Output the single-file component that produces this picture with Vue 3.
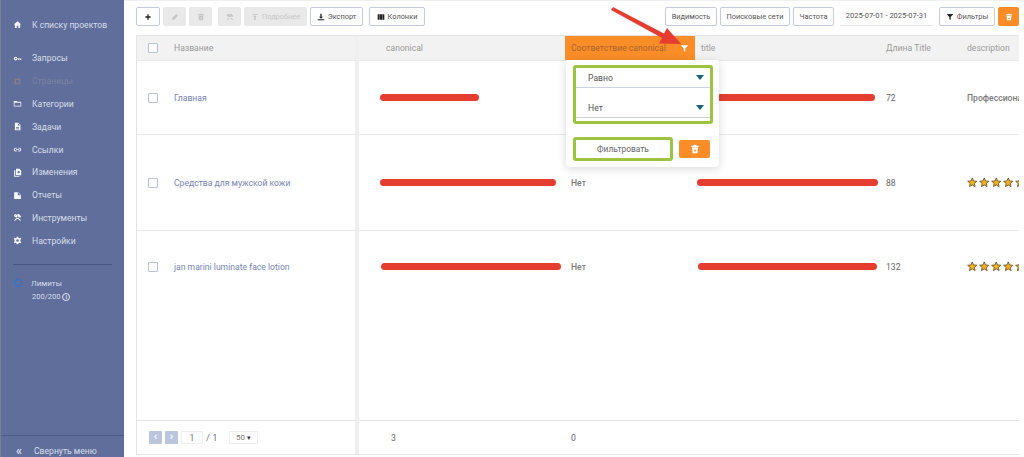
<script setup>
const icons = {
  home: 'M12 3 2 12h3v9h5v-6h4v6h5v-9h3z',
  key: 'M7 7a5 5 0 1 0 4.600 7H14v2h3v-2h2v2h3v-4H11.600A5 5 0 0 0 7 7zm0 3a2 2 0 1 1 0 4 2 2 0 0 1 0-4z',
  page: 'M4 4h16v16H4zM8 8v8h8V8z',
  folder: 'M2 5h8l2 2h10v13H2zm2 5v8h16v-8z',
  file: 'M5 2h9l6 6v14H5zM13 3.500V9h6zM8 13v2h8v-2zm0 4v2h8v-2z',
  link: 'M7 7a5 5 0 0 0 0 10h3v-2.500H7a2.500 2.500 0 0 1 0-5h3V7zm7 0v2.500h3a2.500 2.500 0 0 1 0 5h-3V17h3a5 5 0 0 0 0-10zM8 11v2h8v-2z',
  copy: 'M8 2h9l5 5v12H8zM3 6h3v15h11v2H3zm9 5a3 3 0 1 0 6 0 3 3 0 0 0-6 0z',
  report: 'M3 3h11l7 7v11H3zM13 3.500V11h7.500z',
  tools: 'M3 19 13 9l2 2L5 21zM10 5l5-3 7 7-3 3-3-1-3-3zM9 11 19 21l2-2L11 9A5 5 0 0 0 4 3l3 3-1 1-3-3A5 5 0 0 0 9 11z',
  gear: 'M10 2h4l.7 3 2.500 1.200 2.800-1.400 2 3.400L19.600 10v4l2.400 1.800-2 3.400-2.800-1.400L14.700 19 14 22h-4l-.7-3-2.500-1.200L4 19.200l-2-3.400L4.400 14v-4L2 8.200l2-3.400 2.800 1.400L9.300 5zM12 8.500a3.500 3.500 0 1 0 0 7 3.500 3.500 0 0 0 0-7z',
  trash: 'M9 2h6l1 2h5v3H3V4h5zM5 8h14l-1 14H6zm5 6v4h4v-4z',
  plus: 'M10 4h4v6h6v4h-6v6h-4v-6H4v-4h6z',
  pencil: 'M3 21l1-6L16 3l5 5L9 20z',
  upload: 'M3 3h18v2H3zM12 7l5 5h-3v9h-4v-9H7z',
  download: 'M10 2h4v9h4l-6 6-6-6h4zM2 19h20v3H2z',
  columns: 'M2 4h6v16H2zm7 0h6v16H9zm7 0h6v16h-6z',
  funnel: 'M2 3h20l-8 9v9l-4-3v-6z'
}
const menu = [
  { label: 'Запросы', icon: 'key' },
  { label: 'Страницы', icon: 'page', off: true },
  { label: 'Категории', icon: 'folder' },
  { label: 'Задачи', icon: 'file' },
  { label: 'Ссылки', icon: 'link' },
  { label: 'Изменения', icon: 'copy' },
  { label: 'Отчеты', icon: 'report' },
  { label: 'Инструменты', icon: 'tools' },
  { label: 'Настройки', icon: 'gear' }
]
const rows = [
  { name: 'Главная', c: 'c1', match: '', t: 't1', len: '72', desc: 'Профессиональная косметика' },
  { name: 'Средства для мужской кожи', c: 'c2', match: 'Нет', t: 't2', len: '88', stars: true },
  { name: 'jan marini luminate face lotion', c: 'c3', match: 'Нет', t: 't3', len: '132', stars: true }
]
const star = 'M12 2l3 7 7.500.7-5.700 5 1.700 7.300-6.500-3.900L5.500 22l1.700-7.300-5.700-5L9 9z'
</script>

<template>
  <div class="page">
    <aside class="side">
      <div class="top-link">
        <svg class="ico" viewBox="0 0 24 24"><path :d="icons.home" /></svg>
        <span>К списку проектов</span>
      </div>
      <nav class="menu">
        <div v-for="m in menu" :key="m.label" class="item" :class="{ off: m.off }">
          <svg class="ico" viewBox="0 0 24 24"><path :d="icons[m.icon]" /></svg>
          <span>{{ m.label }}</span>
        </div>
      </nav>
      <div class="limits">
        <div class="lim-row">
          <span class="ring"></span>
          <span>Лимиты</span>
        </div>
        <div class="lim-val">200/200 <span class="info">i</span></div>
      </div>
      <div class="collapse"><span class="dbl">«</span><span>Свернуть меню</span></div>
    </aside>

    <main class="main">
      <div class="toolbar">
        <div class="tools">
          <button class="btn w-plus"><svg viewBox="0 0 24 24"><path :d="icons.plus" /></svg></button>
          <button class="btn dis w-sq"><svg viewBox="0 0 24 24"><path :d="icons.pencil" /></svg></button>
          <button class="btn dis w-sq"><svg viewBox="0 0 24 24"><path :d="icons.trash" /></svg></button>
          <button class="btn dis w-sq gap-l"><svg viewBox="0 0 24 24"><path :d="icons.tools" /></svg></button>
          <button class="btn dis w-more"><svg viewBox="0 0 24 24"><path :d="icons.upload" /></svg>Подробнее</button>
          <button class="btn w-exp"><svg viewBox="0 0 24 24"><path :d="icons.download" /></svg>Экспорт</button>
          <button class="btn w-col gap-l"><svg viewBox="0 0 24 24"><path :d="icons.columns" /></svg>Колонки</button>
        </div>
        <div class="tools">
          <button class="btn w-vis">Видимость</button>
          <button class="btn w-net">Поисковые сети</button>
          <button class="btn w-freq">Частота</button>
          <div class="date">2025-07-01 - 2025-07-31</div>
          <button class="btn w-flt"><svg viewBox="0 0 24 24"><path :d="icons.funnel" /></svg>Фильтры</button>
          <button class="btn orange w-del"><svg viewBox="0 0 24 24"><path :d="icons.trash" /></svg></button>
        </div>
      </div>

      <div class="table">
        <div class="cell head first">
          <span class="check"></span><span>Название</span>
        </div>
        <div class="cell head pl-27">canonical</div>
        <div class="cell head active">
          <span>Соответствие canonical</span>
          <svg class="hfilter" viewBox="0 0 24 24"><path :d="icons.funnel" /></svg>
          <div class="popover">
            <div class="green selects">
              <div class="sel"><span>Равно</span><i class="tri"></i></div>
              <div class="sel"><span>Нет</span><i class="tri"></i></div>
            </div>
            <div class="pop-actions">
              <button class="green apply">Фильтровать</button>
              <button class="pop-del"><svg viewBox="0 0 24 24"><path :d="icons.trash" /></svg></button>
            </div>
          </div>
        </div>
        <div class="cell head">title</div>
        <div class="cell head">Длина Title</div>
        <div class="cell head clip">description</div>

        <template v-for="r in rows" :key="r.name">
          <div class="cell first line">
            <span class="check"></span><a class="name">{{ r.name }}</a>
          </div>
          <div class="cell line scrib-cell"><span class="scrib" :class="r.c"></span></div>
          <div class="cell line med">{{ r.match }}</div>
          <div class="cell line scrib-cell"><span class="scrib" :class="r.t"></span></div>
          <div class="cell line">{{ r.len }}</div>
          <div class="cell line clip">
            <span v-if="r.desc" class="med nowrap">{{ r.desc }}</span>
            <span v-else class="stars">
              <svg v-for="n in 5" :key="n" viewBox="0 0 24 24"><path :d="star" /></svg>
            </span>
          </div>
        </template>

        <div class="cell first filler"></div>
        <div class="cell"></div><div class="cell"></div><div class="cell"></div><div class="cell"></div><div class="cell"></div>

        <div class="cell first foot">
          <div class="pager">
            <span class="pg">‹</span><span class="pg">›</span>
            <span class="pg-input">1</span>
            <span class="pg-of">/ 1</span>
            <span class="pg-size">50 <i>▾</i></span>
          </div>
        </div>
        <div class="cell foot total-a">3</div>
        <div class="cell foot">0</div>
        <div class="cell foot"></div><div class="cell foot"></div><div class="cell foot"></div>
      </div>
    </main>

    <svg class="arrow" viewBox="0 0 1024 457">
      <path d="M613 7 664 33.500 667 28 681 44 659 43.500 662 38 611 10Z" />
    </svg>
  </div>
</template>

<style>
html, body { margin: 0; background: #fff; }
</style>

<style scoped>
.page {
  position: relative;
  display: flex;
  width: 1024px;
  height: 457px;
  overflow: hidden;
  font-family: Roboto, "Liberation Sans", sans-serif;
  font-size: 8.600px;
  color: #666;
  background: #fff;
}
.side {
  width: 124px;
  flex: none;
  display: flex;
  flex-direction: column;
  background: #5f6e9a;
  color: #d8deea;
  font-size: 8.600px;
  border-left: 1px solid #777f90;
  box-sizing: border-box;
}
.top-link, .item {
  display: flex;
  align-items: center;
  height: 23px;
  padding-left: 12px;
  gap: 10px;
}
.top-link { margin-top: 13px; }
.ico { width: 9px; height: 9px; fill: #f4f6fa; flex: none; }
.menu { margin-top: 11px; padding-bottom: 12px; }
.item { height: 22.800px; }
.item.off { color: #7b84a0; }
.item.off .ico { fill: #837f85; }
.limits {
  margin: 0 12px;
  padding-top: 10px;
  border-top: 1px solid #48557f;
  font-size: 8px;
}
.lim-row { display: flex; align-items: center; gap: 9px; height: 16px; }
.ring {
  width: 6px;
  height: 6px;
  border: 1.500px solid #2a74dd;
  border-radius: 50%;
  flex: none;
  margin-left: 1px;
}
.lim-val { margin: 0 0 0 19px; line-height: 12px; font-size: 7.500px; }
.info {
  display: inline-block;
  width: 6px;
  height: 6px;
  line-height: 6px;
  border: 1px solid #e6eaf2;
  border-radius: 50%;
  text-align: center;
  font-size: 6px;
  font-weight: 700;
  vertical-align: 0;
}
.collapse {
  margin-top: auto;
  height: 22px;
  border-top: 1px solid #4f5c86;
  display: flex;
  align-items: center;
  padding-left: 15px;
  gap: 12px;
  font-size: 8.600px;
  padding-top: 9px;
  box-sizing: border-box;
}
.dbl { font-weight: 700; font-size: 12px; }

.main {
  flex: 1;
  min-width: 0;
  padding: 1px 5px 2px 12px;
  display: flex;
  flex-direction: column;
  border-top: 1px solid #f0f0f0;
  box-sizing: border-box;
}
.toolbar {
  display: flex;
  justify-content: space-between;
  height: 33px;
  padding-top: 5px;
  box-sizing: border-box;
  flex: none;
}
.tools { display: flex; gap: 3px; height: 19px; }
.btn {
  display: inline-flex;
  align-items: center;
  justify-content: center;
  gap: 3px;
  height: 19px;
  padding: 0;
  box-sizing: border-box;
  border: 1px solid #c3cbe0;
  border-radius: 2px;
  background: #fff;
  color: #555;
  font: 7.400px Roboto, sans-serif;
}
.btn svg { width: 8px; height: 8px; fill: #222; flex: none; }
.btn.dis { background: #e9e9e9; border-color: #e9e9e9; color: #c6c6c6; }
.btn.dis svg { fill: #c4c4c4; }
.btn.orange { background: #fb8d28; border-color: #fb8d28; }
.btn.orange svg { fill: #fff; }
.w-plus { width: 24px; }
.w-sq { width: 23px; }
.gap-l { margin-left: 3px; }
.w-more { width: 63px; }
.w-exp { width: 53px; }
.w-col { width: 56px; }
.w-vis { width: 52px; }
.w-net { width: 70px; }
.w-freq { width: 41px; }
.w-flt { width: 56px; margin-left: 3px; }
.w-del { width: 21px; }
.date {
  width: 93px;
  margin-left: 3px;
  height: 19px;
  line-height: 18px;
  text-align: center;
  font-size: 7.500px;
  color: #555;
  white-space: nowrap;
  border-bottom: 1px solid #dfe2ec;
  box-sizing: border-box;
}

.table {
  flex: 1;
  min-height: 0;
  display: grid;
  grid-template-columns: 222px 206px 130px 185px 81px 58px;
  grid-template-rows: 25px 74px 96px 71px 1fr 34px;
  border: 1px solid #e4e4e4;
  border-right: 0;
}
.cell {
  display: flex;
  align-items: center;
  padding-left: 6px;
  min-width: 0;
  box-sizing: border-box;
}
.head { background: #f2f2f2; color: #9a9a9a; border-bottom: 1px solid #e9e9e9; }
.first { border-right: 4px solid #f0f0f0; padding-left: 11px; gap: 16px; }
.pl-27 { padding-left: 27px; }
.active {
  position: relative;
  background: #fb8d28;
  color: #a5672d;
  padding-right: 0;
}
.hfilter {
  position: absolute;
  right: 6px;
  top: 8px;
  width: 9px;
  height: 9px;
  fill: #fff;
}
.check {
  width: 10px;
  height: 10px;
  flex: none;
  box-sizing: border-box;
  border: 1px solid #b8c1d8;
  border-radius: 1px;
  background: #fff;
}
.name { color: #7784b3; }
.line { border-bottom: 1px solid #eaeaea; }
.table > .cell:nth-child(n+19):nth-child(-n+24) { border-bottom: 0; }
.foot { border-top: 1px solid #e6e6e6; color: #666; }
.total-a { padding-left: 32px; }
.clip { overflow: hidden; }
.med { font-weight: 500; color: #7a7a7a; }
.nowrap { white-space: nowrap; }
.scrib-cell { padding-left: 0; padding-bottom: 1px; }
.scrib {
  display: block;
  height: 7px;
  border-radius: 4px;
  background: #e53d30;
}
.c1 { width: 99px; margin-left: 21px; }
.c2 { width: 176px; margin-left: 21px; }
.c3 { width: 180px; margin-left: 22px; }
.t1 { width: 158px; margin-left: 22px; }
.t2 { width: 181px; margin-left: 2px; }
.t3 { width: 179px; margin-left: 3px; }
.stars { display: flex; gap: 1.500px; flex: none; }
.stars svg { width: 10.500px; height: 10.500px; fill: #f2b01e; stroke: #5a4a25; stroke-width: 1.800; }

.popover {
  position: absolute;
  left: 1px;
  top: 24px;
  width: 153px;
  height: 107px;
  padding: 5px 6px 0 7px;
  box-sizing: border-box;
  background: #fff;
  border-radius: 0 0 4px 4px;
  box-shadow: 0 2px 10px rgba(0, 0, 0, 0.15);
  z-index: 3;
  color: #555;
}
.green { border: 3px solid #9cc440; border-radius: 3px; box-sizing: border-box; }
.selects { width: 140px; height: 59px; padding: 0; }
.sel {
  display: flex;
  justify-content: space-between;
  align-items: center;
  height: 30px;
  padding: 10px 6px 0 12px;
  box-sizing: border-box;
  border-bottom: 1px solid #ccd1e3;
}
.sel:first-child { height: 20px; padding: 0 6px 0 12px; }
.tri {
  width: 0;
  height: 0;
  border-left: 4px solid transparent;
  border-right: 4px solid transparent;
  border-top: 5px solid #14627c;
}
.pop-actions {
  display: flex;
  align-items: center;
  gap: 6px;
  margin-top: 13px;
}
.apply {
  width: 100px;
  height: 24px;
  padding: 0;
  background: #fff;
  color: #666;
  font: 8.400px Roboto, sans-serif;
}
.pop-del {
  width: 31px;
  height: 18px;
  padding: 0;
  border: 0;
  border-radius: 2px;
  background: #fb8d28;
  display: flex;
  align-items: center;
  justify-content: center;
}
.pop-del svg { width: 10px; height: 10px; fill: #fff; }

.pager { display: flex; align-items: center; gap: 3px; color: #777; margin-left: 1px; }
.pg {
  width: 13px;
  height: 13px;
  border-radius: 1px;
  background: #bcc5de;
  color: #fff;
  font-size: 11px;
  line-height: 11px;
  text-align: center;
  font-weight: 700;
}
.pg-input {
  width: 22px;
  height: 13px;
  line-height: 13px;
  border: 1px solid #eee;
  text-align: center;
  box-sizing: border-box;
}
.pg-of { width: 20px; font-size: 9.500px; }
.pg-size {
  width: 29px;
  height: 13px;
  line-height: 12px;
  border: 1px solid #eee;
  box-sizing: border-box;
  padding-left: 6px;
  font-size: 8px;
}
.pg-size i { font-style: normal; color: #333; font-size: 7px; }
.arrow {
  position: absolute;
  inset: 0;
  width: 1024px;
  height: 457px;
  pointer-events: none;
  z-index: 5;
}
.arrow path { fill: #e53d30; }
</style>
